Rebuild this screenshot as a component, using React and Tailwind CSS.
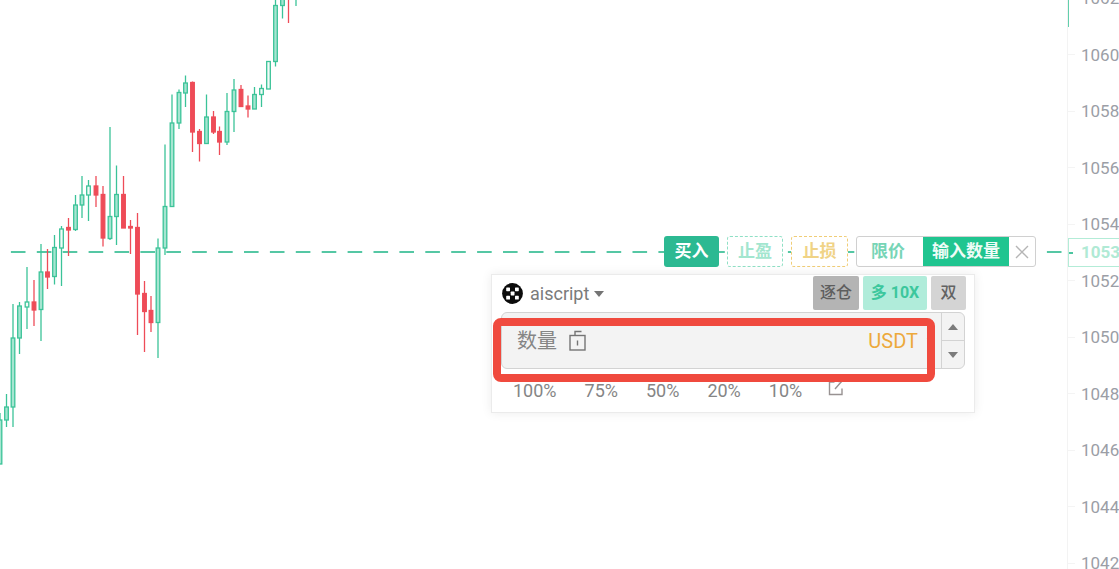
import React, { useState } from 'react';

const UP = '#3bc398';
const DOWN = '#ee4c58';

// [x, high, bodyTop, bodyBottom, low, type]  u = up, d = down, h = hollow up
const candles = [
  [0, 413, 420, 464, 464, 'u'],
  [6.5, 394, 407, 420, 427, 'u'],
  [13, 304, 338, 407, 427, 'u'],
  [19.5, 302, 306, 338, 354, 'u'],
  [27, 267, 302, 307, 329, 'h'],
  [34, 280, 302, 310, 326, 'd'],
  [41, 244, 272, 309.5, 341, 'u'],
  [47.5, 249, 272, 277, 289, 'd'],
  [54.5, 235, 247.5, 276.5, 284.5, 'u'],
  [61.5, 226, 229, 248, 286, 'h'],
  [68.5, 218, 227.5, 230, 256, 'd'],
  [75.5, 195, 205, 229.5, 231, 'u'],
  [82, 176, 195, 205, 218, 'u'],
  [88.5, 180, 186, 195, 221, 'h'],
  [96, 176, 186, 195, 207, 'd'],
  [103, 186, 194.5, 238, 246.5, 'd'],
  [110, 127, 216.5, 238.5, 240, 'u'],
  [116.5, 165.5, 194.5, 216.5, 245, 'u'],
  [123.5, 176, 194.5, 228, 228, 'd'],
  [130.5, 220, 226.5, 228, 254, 'd'],
  [137.5, 213, 227.5, 294, 335, 'd'],
  [144.5, 281, 293.5, 311.5, 352, 'd'],
  [151, 296, 310.5, 322.5, 332, 'd'],
  [158, 238.5, 248, 322.5, 358, 'u'],
  [165, 144.5, 206.5, 248, 255, 'u'],
  [172, 94.5, 123, 206.5, 206.5, 'u'],
  [179, 89.5, 92.5, 123, 129, 'u'],
  [185.5, 75.5, 83, 93, 107, 'u'],
  [192.5, 81.5, 82.5, 132, 152, 'd'],
  [199.5, 129, 131.5, 143.5, 161.5, 'd'],
  [206.5, 94.5, 117, 143.5, 143.5, 'u'],
  [213.5, 111, 117, 132, 134, 'd'],
  [219.5, 126.5, 131.5, 142, 155, 'd'],
  [227, 93, 111.5, 142, 145, 'u'],
  [234, 79, 90, 111.5, 132, 'u'],
  [241, 85, 89.5, 106.5, 106.5, 'd'],
  [248, 95.5, 106, 109, 117.5, 'd'],
  [254.5, 87, 94.5, 109, 109, 'u'],
  [261.5, 84.5, 88.5, 94.5, 107, 'h'],
  [268.5, 61.5, 61.5, 89, 89, 'h'],
  [275.5, -5, 5.5, 61.5, 66.5, 'u'],
  [282.5, -10, -8, 5.5, 18.5, 'u'],
  [288.5, -10, -10, -6, 23, 'd'],
  [296, -10, -10, -6, 6, 'u'],
];

const prices = [1062, 1060, 1058, 1056, 1054, 1052, 1050, 1048, 1046, 1044, 1042];
const percents = ['100%', '75%', '50%', '20%', '10%'];

const Candle = ({ data }) => {
  const [x, high, top, bottom, low, type] = data;
  const color = type === 'd' ? DOWN : UP;
  const fill = type === 'd' ? DOWN : type === 'h' ? '#f2fbf8' : '#a6e5d1';
  return (
    <g stroke={color} strokeWidth="1.3">
      <line x1={x} x2={x} y1={high} y2={low} />
      <rect x={x - 1.8} y={top} width="3.6" height={bottom - top} fill={fill} />
    </g>
  );
};

const ExchangeLogo = () => (
  <svg width="21" height="21" viewBox="0 0 21 21" className="shrink-0">
    <circle cx="10.5" cy="10.5" r="10.4" fill="#0b0b0b" />
    <g fill="#fff">
      <rect x="4.2" y="4.4" width="3.8" height="3.8" rx=".6" />
      <rect x="13" y="4.4" width="3.8" height="3.8" rx=".6" />
      <rect x="8.7" y="8.6" width="3.8" height="3.8" rx=".6" />
      <rect x="4.2" y="12.8" width="3.8" height="3.8" rx=".6" />
      <rect x="13" y="12.8" width="3.8" height="3.8" rx=".6" />
    </g>
  </svg>
);

const Caret = ({ up = false, className = 'w-3' }) => (
  <svg height="6" viewBox="0 0 12 6" preserveAspectRatio="none" className={className}>
    <path d={up ? 'M1 6 6 0l5 6z' : 'M1 0h10L6 6z'} fill="currentColor" />
  </svg>
);

const LockIcon = () => (
  <svg width="17" height="21" viewBox="0 0 17 21" fill="none" stroke="#747474" strokeWidth="1.4">
    <rect x="1" y="5.5" width="15" height="14.5" />
    <path d="M6 5.5V1.5h6.5M8.5 10.5v5" />
  </svg>
);

const EditIcon = () => (
  <svg width="16" height="16" viewBox="0 0 16 16" fill="none" stroke="#989292" strokeWidth="1.4">
    <path d="M6.5 2H1.5v12.5H14V8.5M7 9 13.5 1.5" />
    <path d="M10 1.5h4" />
  </svg>
);

const PriceAxis = () => (
  <aside className="relative w-[52px] shrink-0 overflow-hidden border-l border-[#f3f3f3]">
    <div className="-mt-3 flex h-[585px] flex-col justify-between">
      {prices.map((p) => (
        <div key={p} className="flex h-5 items-center gap-[6px] text-[17px] leading-5 text-[#9b9ea6]">
          <span className="h-px w-[7px] shrink-0 bg-[#f4f4f4]" />
          <span>{p}</span>
        </div>
      ))}
    </div>
    <div className="absolute left-0 top-0 h-[27px] w-px bg-[#62cfac]" />
    {/* current order price */}
    <div className="absolute -right-1 left-0 top-[238px] flex h-[29px] items-center gap-2 border border-[#b3ecd7] bg-white text-[17px] font-bold text-[#b0ead5]">
      <span className="h-0.5 w-1 shrink-0 bg-[#4cc5a0]" />
      <span>1053</span>
    </div>
  </aside>
);

const OrderTags = () => (
  <div className="flex h-[31px] items-stretch gap-2 text-[17px] font-bold leading-none">
    <button className="w-[55px] rounded-[3px] bg-[#2cb992] text-white">买入</button>
    <button className="w-[56px] rounded-[3px] border border-dashed border-[#8fe0c5] bg-white text-[#a3e6cf]">
      止盈
    </button>
    <button className="w-[57px] rounded-[3px] border border-dashed border-[#f0cd77] bg-white text-[#f0d386]">
      止损
    </button>
    <div className="flex w-[180px] rounded-[3px] border border-[#d0d0d0] bg-white">
      <button className="flex-1 pr-1 text-[#77d5b6]">限价</button>
      <button className="w-[86px] bg-[#20c590] text-[#effcf7]">输入数量</button>
      <button aria-label="关闭" className="flex w-[26px] items-center justify-center">
        <svg width="14" height="14" viewBox="0 0 14 14" stroke="#b5b5b5" strokeWidth="1.4">
          <path d="M1 1l12 12M13 1 1 13" />
        </svg>
      </button>
    </div>
  </div>
);

const OrderPanel = () => {
  const [amount, setAmount] = useState('');

  return (
    <div className="relative w-[484px] border border-[#ebebeb] bg-white shadow-[0_0_10px_rgba(0,0,0,0.08)]">
      {/* Header */}
      <div className="flex h-[35px] items-center pl-[10px] pr-2">
        <button className="flex items-center pt-0.5 text-lg leading-6 text-[#7b7b7b]">
          <ExchangeLogo />
          <span className="ml-[7px]">aiscript</span>
          <Caret className="ml-1 w-3 text-[#747474]" />
        </button>
        <div className="ml-auto flex h-[34px] gap-1 text-base leading-none">
          <button className="w-[46px] rounded-[2px] bg-[#b4b4b4] font-medium text-[#5e5e5e]">逐仓</button>
          <button className="w-[64px] rounded-[2px] bg-[#b0ecda] font-bold text-[#3cc79d]">多 10X</button>
          <button className="w-[35px] rounded-[2px] bg-[#d4d4d4] font-medium text-[#626262]">双</button>
        </div>
      </div>

      {/* Amount */}
      <div className="ml-[9px] mr-[9px] mt-[2px] flex h-[57px] rounded-[6px] border border-[#d3d3d3] bg-[#f3f3f3]">
        <div className="flex min-w-0 flex-1 items-center pl-[15px]">
          <label htmlFor="amount" className="text-xl text-[#858585]">数量</label>
          <span className="ml-3">
            <LockIcon />
          </span>
          <input
            id="amount"
            type="text"
            value={amount}
            onChange={(e) => setAmount(e.target.value)}
            className="mx-2 min-w-0 flex-1 bg-transparent text-xl text-[#555] outline-none"
          />
          <button className="mr-[7px] flex items-center gap-2 text-xl text-[#eda93b]">
            USDT
            <Caret className="w-2" />
          </button>
        </div>
        <div className="flex w-[23px] flex-col border-l border-[#d3d3d3] text-[#7b7b7b]">
          <button aria-label="增加" className="flex flex-1 items-center justify-center border-b border-[#d3d3d3]">
            <Caret up />
          </button>
          <button aria-label="减少" className="flex flex-1 items-center justify-center">
            <Caret />
          </button>
        </div>
      </div>

      {/* Percent shortcuts */}
      <div className="flex h-[43px] items-center gap-7 pl-[21px] text-lg text-[#858585]">
        {percents.map((p) => (
          <button key={p}>{p}</button>
        ))}
        <button aria-label="编辑" className="-ml-0.5 pb-1.5">
          <EditIcon />
        </button>
      </div>

      {/* Highlight frame */}
      <div className="pointer-events-none absolute left-px right-[39px] top-[43px] h-[64px] rounded-lg border-8 border-[#f04a3e]" />
    </div>
  );
};

const App = () => {
  return (
    <div className="flex h-screen overflow-hidden bg-white font-[Roboto,'Noto_Sans_CJK_SC',sans-serif]">
      <main className="relative min-w-0 flex-1">
        <svg className="block h-full w-full">
          <line x1="-15" x2="100%" y1="252" y2="252" stroke="#55c7a4" strokeWidth="2" strokeDasharray="14.6 11.3" />
          {candles.map((c) => (
            <Candle key={c[0]} data={c} />
          ))}
        </svg>
        {/* Order line controls, anchored to the price level */}
        <div className="absolute right-[31px] top-[236px] flex flex-col items-end gap-[7px]">
          <OrderTags />
          <div className="pr-[61px]">
            <OrderPanel />
          </div>
        </div>
      </main>
      <PriceAxis />
    </div>
  );
};

export default App;
